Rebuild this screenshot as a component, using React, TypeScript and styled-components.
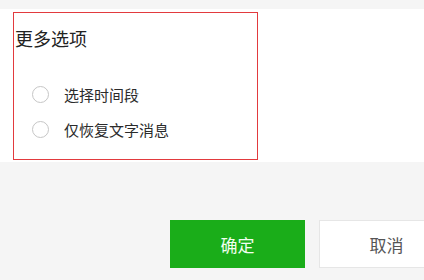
import React from 'react';
import styled, { createGlobalStyle } from "styled-components";

const GlobalStyle = createGlobalStyle`
  html, body {
    margin: 0;
    padding: 0;
    background: #f5f5f5;
    overflow: hidden;
  }
  body {
    font-family: "Noto Sans CJK SC", "Noto Sans", sans-serif;
    color: #333;
  }
`

type OptionPropsType = {
    label: string
}

const Option = (props: OptionPropsType) => {
    return (
        <Row>
            <Radio />
            <Label>{props.label}</Label>
        </Row>
    );
};

export default function App() {
    return (
        <Page>
            <GlobalStyle />
            <Panel>
                <Marked>
                    <Title>更多选项</Title>
                    <Options>
                        <Option label={"选择时间段"} />
                        <Option label={"仅恢复文字消息"} />
                    </Options>
                </Marked>
            </Panel>
            <Footer>
                <Button primary>确定</Button>
                <Button>取消</Button>
            </Footer>
        </Page>
    );
}

const Page = styled.div`
  width: 424px;
  height: 280px;
  padding-top: 9px;
  box-sizing: border-box;
  overflow: hidden;
`

const Panel = styled.div`
  background: #fff;
  height: 153px;
  padding: 3px 0 0 13px;
  box-sizing: border-box;
`

const Marked = styled.div`
  width: 245px;
  height: 148px;
  border: 1.5px solid #e23a3e;
  box-sizing: border-box;
  padding-top: 13px;
`

const Title = styled.div`
  font-size: 18px;
  line-height: 24px;
  color: #222;
  padding-left: 1px;
`

const Options = styled.div`
  display: flex;
  flex-direction: column;
  margin-top: 27px;
  padding-left: 19px;
`

const Row = styled.div`
  display: flex;
  align-items: center;
  height: 35px;
`

const Radio = styled.span`
  width: 17px;
  height: 17px;
  margin-left: -1px;
  border: 1.5px solid #c6c6c6;
  border-radius: 50%;
  box-sizing: border-box;
  flex-shrink: 0;
`

const Label = styled.span`
  font-size: 15px;
  color: #2b2b2b;
  margin-left: 15px;
`

const Footer = styled.div`
  display: flex;
  gap: 14px;
  padding: 58px 0 0 170px;
`

const Button = styled.button<{ primary?: boolean }>`
  width: 135px;
  height: 48px;
  flex-shrink: 0;
  font-family: "Noto Sans CJK SC", sans-serif;
  font-size: 17px;
  border: 1px solid ${p => p.primary ? "#1aad19" : "#e6e6e6"};
  background: ${p => p.primary ? "#1aad19" : "#fff"};
  color: ${p => p.primary ? "#f2fff0" : "#555"};
  padding: 0;
`
